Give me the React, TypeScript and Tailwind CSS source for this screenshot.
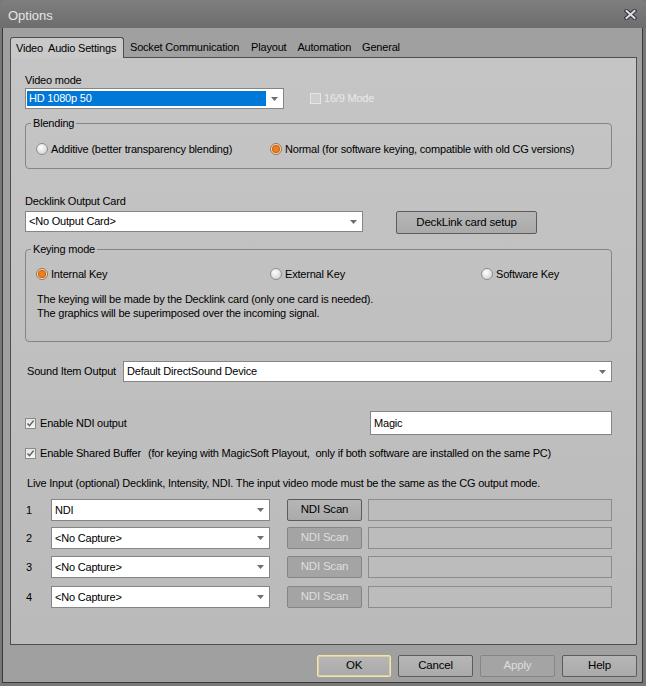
import React from "react";

function DropArrow() {
  return (
    <svg width="7" height="4" viewBox="0 0 7 4" className="shrink-0">
      <path d="M0 0h7L3.5 4z" fill="#6e6e6e" />
    </svg>
  );
}

function Combo({
  value,
  className = "",
  highlight = false,
}: {
  value: string;
  className?: string;
  highlight?: boolean;
}) {
  return (
    <div className={`flex items-stretch bg-white border border-[#858585] py-[2px] pl-[1px] ${className}`}>
      <div className={`flex-1 flex items-center pl-[2px] ${highlight ? "bg-[#0078d7] text-white" : ""}`}>
        <span className="whitespace-pre">{value}</span>
      </div>
      <div className="w-[17px] flex items-center justify-center">
        <DropArrow />
      </div>
    </div>
  );
}

function Radio({ checked = false }: { checked?: boolean }) {
  return (
    <span
      className={`w-[12px] h-[12px] rounded-full border flex items-center justify-center shrink-0 ${
        checked
          ? "border-[#9a7350] bg-[#f3dcc2]"
          : "border-[#8e8e8e] bg-[radial-gradient(circle_at_40%_35%,#ffffff,#c9c9c9)]"
      }`}
    >
      {checked && <span className="w-[6px] h-[6px] rounded-full bg-[#ee7f1e] shadow-[0_0_0_1px_#c0621a]" />}
    </span>
  );
}

function Check({ checked = false, disabled = false }: { checked?: boolean; disabled?: boolean }) {
  return (
    <span
      className={`w-[11px] h-[11px] border flex items-center justify-center shrink-0 ${
        disabled ? "border-[#e6e6e6] bg-[#cfcfcf]" : "border-[#8a8a8a] bg-gradient-to-b from-[#e4e4e4] to-[#f6f6f6]"
      }`}
    >
      {checked && (
        <svg width="9" height="9" viewBox="0 0 9 9">
          <path d="M1.5 4.5l2 2.2L7.6 1.6" stroke="#606060" strokeWidth="1.5" fill="none" />
        </svg>
      )}
    </span>
  );
}

function Btn({
  children,
  className = "",
  disabled = false,
  focused = false,
}: {
  children: React.ReactNode;
  className?: string;
  disabled?: boolean;
  focused?: boolean;
}) {
  return (
    <div
      className={`flex items-center justify-center rounded-[2px] border ${
        disabled
          ? "border-[#858585] bg-[#a4a4a4] text-[#dedede]"
          : focused
          ? "border-[#f4e7a4] bg-gradient-to-b from-[#b6b6b6] to-[#aaaaaa] shadow-[inset_0_0_0_1px_#d9cfa0]"
          : "border-[#5c5c5c] bg-gradient-to-b from-[#b6b6b6] to-[#aaaaaa]"
      } ${className}`}
    >
      {children}
    </div>
  );
}

function LiveRow({ n, value, enabled = false, mt }: { n: number; value: string; enabled?: boolean; mt: string }) {
  return (
    <div className={`flex items-center h-[22px] ${mt}`}>
      <span className="w-[26px] pl-[1px]">{n}</span>
      <Combo value={value} className="w-[219px] h-[22px]" />
      <Btn disabled={!enabled} className="ml-[17px] w-[75px] h-[22px] text-[11.5px]">
        NDI Scan
      </Btn>
      <div className="ml-[6px] w-[244px] h-[22px] border border-[#8c8c8c] bg-[#bcbcbc]" />
    </div>
  );
}

export default function App() {
  return (
    <div className="w-[646px] h-[686px] bg-[#777777] font-['Liberation_Sans',Arial,sans-serif] text-[11px] tracking-[-0.2px] text-black overflow-hidden">
      {/* Title bar */}
      <div className="h-[28px] rounded-t-[6px] bg-gradient-to-b from-[#7e7e7e] to-[#6d6d6d] flex items-center justify-between pl-[8px] pr-[9px] pt-[4px]">
        <span className="text-[13px] text-[#e6e6e6] tracking-normal">Options</span>
        <svg width="13" height="11" viewBox="0 0 13 11" className="-mt-[3px]">
          <path d="M2.5 2l8 7M10.5 2l-8 7" stroke="#34343f" strokeWidth="4" strokeLinecap="square" />
          <path d="M2.5 2l8 7M10.5 2l-8 7" stroke="#dcdce6" strokeWidth="2" strokeLinecap="square" />
        </svg>
      </div>

      {/* Body */}
      <div className="ml-[2px] w-[641px] h-[655px] border-x border-b border-[#3a3a3a] bg-[#a0a0a0] pl-[7px] pr-[5px] pt-[8px]">
        {/* Tabs */}
        <div className="flex items-end h-[21px]">
          <div className="relative z-10 h-[21px] -mb-px w-[114px] rounded-t-[3px] border-x border-t border-[#4e4e4e] bg-[#c9c9c9] flex items-center pl-[5px] whitespace-pre">
            {"Video  Audio Settings"}
          </div>
          <div className="flex items-center h-[20px] pt-[1px]">
            <span className="ml-[6px]">Socket Communication</span>
            <span className="ml-[12px]">Playout</span>
            <span className="ml-[11px]">Automation</span>
            <span className="ml-[11px]">General</span>
          </div>
        </div>

        {/* Panel */}
        <div className="h-[588px] border border-[#4e4e4e] bg-gradient-to-b from-[#c5c5c5] to-[#bababa] pl-[14px] pr-[24px] flex flex-col">
          <div className="mt-[15px] h-[14px] leading-[14px]">Video mode</div>
          <div className="mt-[1px] flex items-center h-[21px]">
            <Combo value="HD 1080p 50" highlight className="w-[259px] h-[21px]" />
            <div className="ml-[26px] flex items-center gap-[3px] text-[#e9e9e9]">
              <Check disabled />
              <span>16/9 Mode</span>
            </div>
          </div>

          <fieldset className="mt-[7px] h-[53px] border border-[#858585] rounded-[4px] pl-[5px]">
            <legend className="px-[2px] leading-[14px]">Blending</legend>
            <div className="mt-[12px] flex items-center h-[14px] pl-[5px]">
              <div className="w-[234px] flex items-center gap-[3px]">
                <Radio />
                <span>Additive (better transparency blending)</span>
              </div>
              <div className="flex items-center gap-[3px]">
                <Radio checked />
                <span>Normal (for software keying, compatible with old CG versions)</span>
              </div>
            </div>
          </fieldset>

          <div className="mt-[25px] h-[14px] leading-[14px]">Decklink Output Card</div>
          <div className="mt-[3px] flex items-start h-[23px]">
            <Combo value="<No Output Card>" className="w-[338px] h-[21px]" />
            <Btn className="ml-[33px] w-[141px] h-[23px] text-[11.5px]">DeckLink card setup</Btn>
          </div>

          <fieldset className="mt-[8px] h-[100px] border border-[#858585] rounded-[4px] pl-[5px]">
            <legend className="px-[2px] leading-[14px]">Keying mode</legend>
            <div className="mt-[11px] flex items-center h-[14px] pl-[5px]">
              <div className="w-[234px] flex items-center gap-[3px]">
                <Radio checked />
                <span>Internal Key</span>
              </div>
              <div className="w-[211px] flex items-center gap-[3px]">
                <Radio />
                <span>External Key</span>
              </div>
              <div className="flex items-center gap-[3px]">
                <Radio />
                <span>Software Key</span>
              </div>
            </div>
            <div className="mt-[11px] pl-[6px] leading-[14px]">
              <div>The keying will be made by the Decklink card (only one card is needed).</div>
              <div>The graphics will be superimposed over the incoming signal.</div>
            </div>
          </fieldset>

          <div className="mt-[19px] flex items-center h-[21px]">
            <span className="w-[98px] pl-[2px]">Sound Item Output</span>
            <Combo value="Default DirectSound Device" className="flex-1 h-[21px]" />
          </div>

          <div className="mt-[29px] flex items-center justify-between h-[24px]">
            <div className="flex items-center gap-[4px]">
              <Check checked />
              <span>Enable NDI output</span>
            </div>
            <div className="w-[242px] h-[24px] bg-white border border-[#858585] flex items-center pl-[3px]">Magic</div>
          </div>

          <div className="mt-[11px] flex items-center h-[14px] whitespace-pre">
            <Check checked />
            <span className="ml-[4px]">Enable Shared Buffer</span>
            <span className="ml-[7px]">(for keying with MagicSoft Playout,  only if both software are installed on the same PC)</span>
          </div>

          <div className="mt-[16px] h-[14px] leading-[14px] pl-[2px]">
            Live Input (optional) Decklink, Intensity, NDI. The input video mode must be the same as the CG output mode.
          </div>

          <LiveRow n={1} value="NDI" enabled mt="mt-[9px]" />
          <LiveRow n={2} value="<No Capture>" mt="mt-[6px]" />
          <LiveRow n={3} value="<No Capture>" mt="mt-[7px]" />
          <LiveRow n={4} value="<No Capture>" mt="mt-[8px]" />
        </div>

        {/* Bottom buttons */}
        <div className="mt-[10px] flex justify-end gap-[7px] text-[11.5px]">
          <Btn focused className="w-[74px] h-[22px]">OK</Btn>
          <Btn className="w-[75px] h-[22px]">Cancel</Btn>
          <Btn disabled className="w-[75px] h-[22px]">Apply</Btn>
          <Btn className="w-[75px] h-[22px]">Help</Btn>
        </div>
      </div>
    </div>
  );
}
